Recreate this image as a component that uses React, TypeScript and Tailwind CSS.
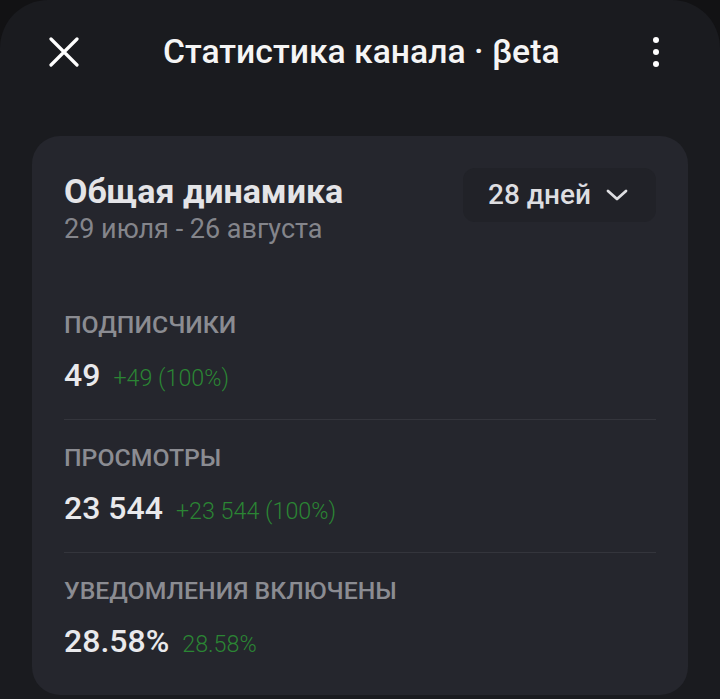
import React from "react";

const font = { fontFamily: "Roboto, 'Noto Sans', sans-serif" };

function Section({ label, value, delta, last }: { label: string; value: string; delta: string; last?: boolean }) {
  return (
    <div className={`pt-[23px] pb-[26px] ${last ? "" : "border-b border-[#34353c]"}`}>
      <div className="text-[24.8px] leading-[30px] font-medium text-[#8b8c92] whitespace-nowrap">{label}</div>
      <div className="mt-[17px] h-[36px] text-[32px] leading-[36px] font-medium text-[#e9e9ec] whitespace-nowrap">
        {value}
        <span className="ml-[13px] text-[23.3px] leading-none font-light text-[#2b8534]">{delta}</span>
      </div>
    </div>
  );
}

export default function App() {
  return (
    <div className="w-[720px] h-[699px] bg-[#121214] overflow-hidden" style={font}>
      <div className="w-full h-full bg-[#1a1b1f] rounded-t-[48px] flex flex-col">
        <div className="h-[104px] shrink-0 flex items-center relative">
          <div className="absolute left-[49px] top-[37px]">
            <svg width="30" height="30" viewBox="0 0 30 30" fill="none" stroke="#ffffff" strokeWidth="3.2" strokeLinecap="round">
              <path d="M2 2 L28 28 M28 2 L2 28" />
            </svg>
          </div>
          <div className="ml-[163px] text-[33.7px] leading-[40px] font-medium text-[#f5f5f5] whitespace-nowrap">Статистика канала · βeta</div>
          <div className="absolute left-[653px] top-[37px] flex flex-col gap-[6px]">
            <div className="w-[6px] h-[6px] rounded-full bg-white" />
            <div className="w-[6px] h-[6px] rounded-full bg-white" />
            <div className="w-[6px] h-[6px] rounded-full bg-white" />
          </div>
        </div>
        <div className="mt-[32px] mx-[32px] bg-[#25262d] rounded-[28px] px-[32px] pt-[35px] pb-[10px]">
          <div className="flex items-start justify-between">
            <div>
              <div className="text-[34px] leading-[40px] font-bold text-[#e4e4e7] whitespace-nowrap">Общая динамика</div>
              <div className="mt-[2px] text-[27px] leading-[32px] text-[#84858b] whitespace-nowrap">29 июля - 26 августа</div>
            </div>
            <div className="-mt-[3px] w-[193px] h-[54px] rounded-[12px] bg-[#212228] flex items-center pl-[25px]">
              <span className="text-[28px] leading-[32px] font-medium text-[#dedee1]">28 дней</span>
              <svg className="ml-[15px]" width="22" height="14" viewBox="0 0 22 14" fill="none" stroke="#dedee1" strokeWidth="2.8" strokeLinecap="round" strokeLinejoin="round">
                <path d="M2 3 L11 11 L20 3" />
              </svg>
            </div>
          </div>
          <div className="mt-[42px]">
            <Section label="ПОДПИСЧИКИ" value="49" delta="+49 (100%)" />
            <Section label="ПРОСМОТРЫ" value="23 544" delta="+23 544 (100%)" />
            <Section label="УВЕДОМЛЕНИЯ ВКЛЮЧЕНЫ" value="28.58%" delta="28.58%" last />
          </div>
        </div>
      </div>
    </div>
  );
}
